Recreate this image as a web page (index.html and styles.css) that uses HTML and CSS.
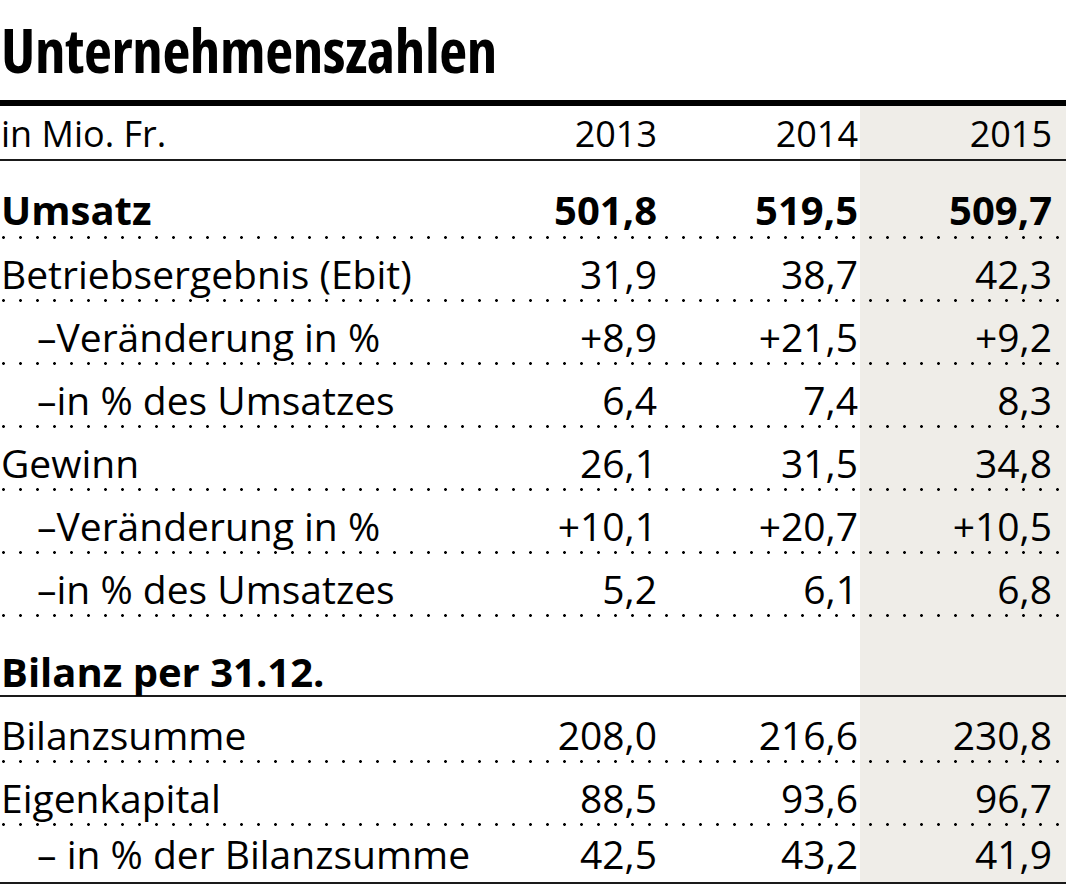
FILE: index.html
```html
<!DOCTYPE html>
<html lang="de">
<head>
<meta charset="utf-8">
<title>Unternehmenszahlen</title>
<link rel="stylesheet" href="styles.css">
</head>
<body>
<div class="chart">
  <h1 class="title">Unternehmenszahlen</h1>
  <div class="table">
    <div class="row head">
      <div class="cell label">in Mio. Fr.</div>
      <div class="cell num c1">2013</div>
      <div class="cell num c2">2014</div>
      <div class="cell num c3">2015</div>
    </div>
    <div class="row dotted top bold">
      <div class="cell label">Umsatz</div>
      <div class="cell num c1">501,8</div>
      <div class="cell num c2">519,5</div>
      <div class="cell num c3">509,7</div>
    </div>
    <div class="row dotted">
      <div class="cell label">Betriebsergebnis (Ebit)</div>
      <div class="cell num c1">31,9</div>
      <div class="cell num c2">38,7</div>
      <div class="cell num c3">42,3</div>
    </div>
    <div class="row dotted">
      <div class="cell label sub">–Veränderung in %</div>
      <div class="cell num c1">+8,9</div>
      <div class="cell num c2">+21,5</div>
      <div class="cell num c3">+9,2</div>
    </div>
    <div class="row dotted">
      <div class="cell label sub">–in % des Umsatzes</div>
      <div class="cell num c1">6,4</div>
      <div class="cell num c2">7,4</div>
      <div class="cell num c3">8,3</div>
    </div>
    <div class="row dotted">
      <div class="cell label">Gewinn</div>
      <div class="cell num c1">26,1</div>
      <div class="cell num c2">31,5</div>
      <div class="cell num c3">34,8</div>
    </div>
    <div class="row dotted">
      <div class="cell label sub">–Veränderung in %</div>
      <div class="cell num c1">+10,1</div>
      <div class="cell num c2">+20,7</div>
      <div class="cell num c3">+10,5</div>
    </div>
    <div class="row dotted">
      <div class="cell label sub">–in % des Umsatzes</div>
      <div class="cell num c1">5,2</div>
      <div class="cell num c2">6,1</div>
      <div class="cell num c3">6,8</div>
    </div>
    <div class="row section bold">
      <div class="cell label">Bilanz per 31.12.</div>
      <div class="cell num c1"></div>
      <div class="cell num c2"></div>
      <div class="cell num c3"></div>
    </div>
    <div class="row dotted after-section">
      <div class="cell label">Bilanzsumme</div>
      <div class="cell num c1">208,0</div>
      <div class="cell num c2">216,6</div>
      <div class="cell num c3">230,8</div>
    </div>
    <div class="row dotted">
      <div class="cell label">Eigenkapital</div>
      <div class="cell num c1">88,5</div>
      <div class="cell num c2">93,6</div>
      <div class="cell num c3">96,7</div>
    </div>
    <div class="row last">
      <div class="cell label sub">– in % der Bilanzsumme</div>
      <div class="cell num c1">42,5</div>
      <div class="cell num c2">43,2</div>
      <div class="cell num c3">41,9</div>
    </div>
  </div>
</div>
</body>
</html>
```

FILE: styles.css
```css
html, body {
  margin: 0;
  padding: 0;
  background: #ffffff;
}

body {
  font-family: "Open Sans", "DejaVu Sans Condensed", sans-serif;
  color: #000000;
}

.chart {
  width: 1066px;
}

.title {
  margin: 0;
  box-sizing: border-box;
  height: 106px;
  padding: 20px 0 0 1px;
  font-size: 61px;
  line-height: 60px;
  font-weight: 700;
  font-stretch: 75%;
  letter-spacing: -0.4px;
  border-bottom: 6px solid #000000;
}

.row {
  position: relative;
  display: grid;
  grid-template-columns: minmax(0, 1fr) 200px 200px 206px;
  box-sizing: border-box;
  height: 63px;
  font-size: 39px;
  line-height: 39px;
}

.cell {
  display: flex;
  align-items: flex-end;
  padding-bottom: 9px;
  white-space: nowrap;
}

.label {
  padding-left: 1px;
}

.label.sub {
  padding-left: 37px;
}

.num {
  justify-content: flex-end;
}

.c1 { padding-right: 3px; }
.c2 { padding-right: 2px; }
.c3 {
  padding-right: 14px;
  background: #efede8;
}

.bold {
  font-weight: 700;
  font-size: 40px;
  line-height: 40px;
}

.head {
  height: 55px;
  font-size: 36px;
  line-height: 36px;
  font-stretch: 90%;
  border-bottom: 2px solid #1a1a1a;
}

.head .cell {
  padding-bottom: 7px;
}

.top {
  height: 78px;
}

.section {
  height: 80px;
  border-bottom: 2px solid #1a1a1a;
}

.section .cell {
  padding-bottom: 3px;
}

.after-section {
  height: 66px;
}

.last {
  height: 58px;
  border-bottom: 2px solid #1a1a1a;
}

.dotted::after {
  content: "";
  position: absolute;
  left: 0;
  right: 0;
  bottom: 0;
  height: 3px;
  background-image: radial-gradient(circle at 1.5px 1.5px, #000000 1.2px, rgba(0, 0, 0, 0) 1.6px);
  background-size: 17px 3px;
  background-position: 2px 0;
  background-repeat: repeat-x;
}
```
